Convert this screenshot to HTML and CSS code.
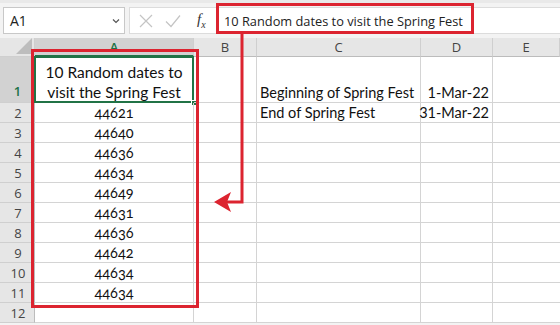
FILE: index.html
```html
<!DOCTYPE html>
<html>
<head>
<meta charset="utf-8">
<link rel="stylesheet" href="styles.css">
</head>
<body>
<div class="app">
  <div class="topstrip"></div>
  <div class="fbar">
    <div class="namebox"><span class="nb-text">A1</span>
      <svg class="chev" width="8" height="6" viewBox="0 0 8 6"><path d="M1 1.5 L4 4.5 L7 1.5" fill="none" stroke="#555" stroke-width="1.2"/></svg>
    </div>
    <div class="fb-gap"></div>
    <div class="fb-icons">
      <svg class="ico" width="16" height="16" viewBox="0 0 16 16"><path d="M2 2 L14 14 M14 2 L2 14" stroke="#c4c4c4" stroke-width="1.2"/></svg>
      <svg class="ico" width="18" height="16" viewBox="0 0 18 16"><path d="M2 8.5 L7 13.5 L16 2.5" fill="none" stroke="#c4c4c4" stroke-width="1.2"/></svg>
      <span class="fx">f<sub>x</sub></span>
    </div>
    <div class="finput">10 Random dates to visit the Spring Fest</div>
  </div>
  <div class="sheet">
    <div class="corner"><svg width="16" height="16" viewBox="0 0 16 16"><path d="M16 0 L16 16 L0 16 Z" fill="#bdbdbd"/></svg></div>
    <div class="ch sel-h">A</div>
    <div class="ch">B</div>
    <div class="ch">C</div>
    <div class="ch">D</div>
    <div class="ch last">E</div>

    <div class="rh sel-r r1">1</div>
    <div class="c a1 r1"><span class="selbox"></span><span class="handle"></span>10 Random dates to visit the Spring Fest</div>
    <div class="c r1"></div>
    <div class="c r1 bottom">Beginning of Spring Fest</div>
    <div class="c r1 bottom right">1-Mar-22</div>
    <div class="c r1 last"></div>

    <div class="rh">2</div><div class="c num">44621</div><div class="c"></div><div class="c">End of Spring Fest</div><div class="c right">31-Mar-22</div><div class="c last"></div>
    <div class="rh">3</div><div class="c num">44640</div><div class="c"></div><div class="c"></div><div class="c"></div><div class="c last"></div>
    <div class="rh">4</div><div class="c num">44636</div><div class="c"></div><div class="c"></div><div class="c"></div><div class="c last"></div>
    <div class="rh">5</div><div class="c num">44634</div><div class="c"></div><div class="c"></div><div class="c"></div><div class="c last"></div>
    <div class="rh">6</div><div class="c num">44649</div><div class="c"></div><div class="c"></div><div class="c"></div><div class="c last"></div>
    <div class="rh">7</div><div class="c num">44631</div><div class="c"></div><div class="c"></div><div class="c"></div><div class="c last"></div>
    <div class="rh">8</div><div class="c num">44636</div><div class="c"></div><div class="c"></div><div class="c"></div><div class="c last"></div>
    <div class="rh">9</div><div class="c num">44642</div><div class="c"></div><div class="c"></div><div class="c"></div><div class="c last"></div>
    <div class="rh">10</div><div class="c num">44634</div><div class="c"></div><div class="c"></div><div class="c"></div><div class="c last"></div>
    <div class="rh">11</div><div class="c num">44634</div><div class="c"></div><div class="c"></div><div class="c"></div><div class="c last"></div>
    <div class="rh">12</div><div class="c"></div><div class="c"></div><div class="c"></div><div class="c"></div><div class="c last"></div>
  </div>
  <svg class="annot" width="560" height="325" viewBox="0 0 560 325">
    <rect x="217.5" y="4.5" width="255" height="28" fill="none" stroke="#dc2430" stroke-width="3"/>
    <rect x="32.5" y="50.5" width="165" height="256" fill="none" stroke="#dc2430" stroke-width="3"/>
    <polyline points="242,34 242,202 226,202" fill="none" stroke="#dc2430" stroke-width="3"/>
    <polygon points="214,202 231,192 227,202 231,212" fill="#dc2430"/>
  </svg>
</div>
</body>
</html>
```
FILE: styles.css
```css
* { box-sizing: border-box; }
html, body { margin: 0; padding: 0; background: #fff; }
.app { position: relative; width: 560px; height: 325px; overflow: hidden; background: #f3f3f3; }
.topstrip { height: 3px; background: #e9e9e9; }
.fbar { display: flex; align-items: stretch; height: 35px; padding: 4px 0 4px 3px; }
.namebox { width: 122px; background: #fff; border: 1px solid #c8c8c8; display: flex; align-items: center; justify-content: space-between; padding: 0 4px 0 6px; font-family: "Open Sans", "Noto Sans", sans-serif; font-size: 14px; color: #222; }
.chev { margin-right: 0; }
.fb-gap { width: 4px; }
.fb-icons { width: 88px; background: #fff; border: 1px solid #dcdcdc; border-right: none; display: flex; align-items: center; padding-left: 8px; gap: 10px; }
.fx { font-family: "Liberation Serif", serif; font-style: italic; font-size: 15px; color: #333; margin-left: 5px; }
.fx sub { font-size: 10px; }
.finput { flex: 1; background: #fff; border: 1px solid #dcdcdc; border-right: none; padding-left: 6px; display: flex; align-items: center; font-family: "Open Sans", "Noto Sans", sans-serif; font-size: 12.8px; color: #222; }
.sheet { display: grid; grid-template-columns: 35px 159px 63px 164px 72px 67px; grid-template-rows: 19px 46px repeat(11, 20px); background: #fff; }
.corner { background: #e6e6e6; border-right: 1px solid #cfcfcf; border-bottom: 1px solid #cfcfcf; display: flex; align-items: flex-end; justify-content: flex-end; padding: 0 2px 2px 0; }
.ch { background: #e6e6e6; border-right: 1px solid #cfcfcf; border-bottom: 1px solid #bcbcbc; font-family: "Open Sans", "Noto Sans", sans-serif; font-size: 13px; color: #444; display: flex; align-items: center; justify-content: center; }
.ch.sel-h { background: #d2d2d2; color: #217346; font-weight: 600; border-bottom: 2px solid #217346; }
.rh { background: #e6e6e6; border-right: 1px solid #bcbcbc; border-bottom: 1px solid #cfcfcf; font-family: "Open Sans", "Noto Sans", sans-serif; font-size: 13px; color: #444; display: flex; align-items: center; justify-content: center; padding-left: 2px; }
.rh.sel-r { background: #d2d2d2; color: #217346; font-weight: 600; align-items: flex-end; padding-bottom: 2px; border-right: 2px solid #217346; }
.c { position: relative; border-right: 1px solid #d4d4d4; border-bottom: 1px solid #d4d4d4; font-family: "Lato", sans-serif; font-size: 14.5px; color: #111; display: flex; align-items: flex-end; padding: 0 3px 1px 3px; white-space: nowrap; }
.c.num { justify-content: center; font-variant-numeric: oldstyle-nums; }
.c.right { justify-content: flex-end; }
.c.last { border-right: none; }
.a1 { white-space: normal; text-align: center; justify-content: center; line-height: 20px; font-size: 15.5px; padding: 0 4px 0 4px; }
.selbox { position: absolute; left: -1px; top: -1px; right: -1px; bottom: -1px; border: 2px solid #217346; }
.handle { position: absolute; right: -4px; bottom: -4px; width: 6px; height: 6px; background: #217346; border: 1px solid #fff; }
.annot { position: absolute; left: 0; top: 0; pointer-events: none; }
```
